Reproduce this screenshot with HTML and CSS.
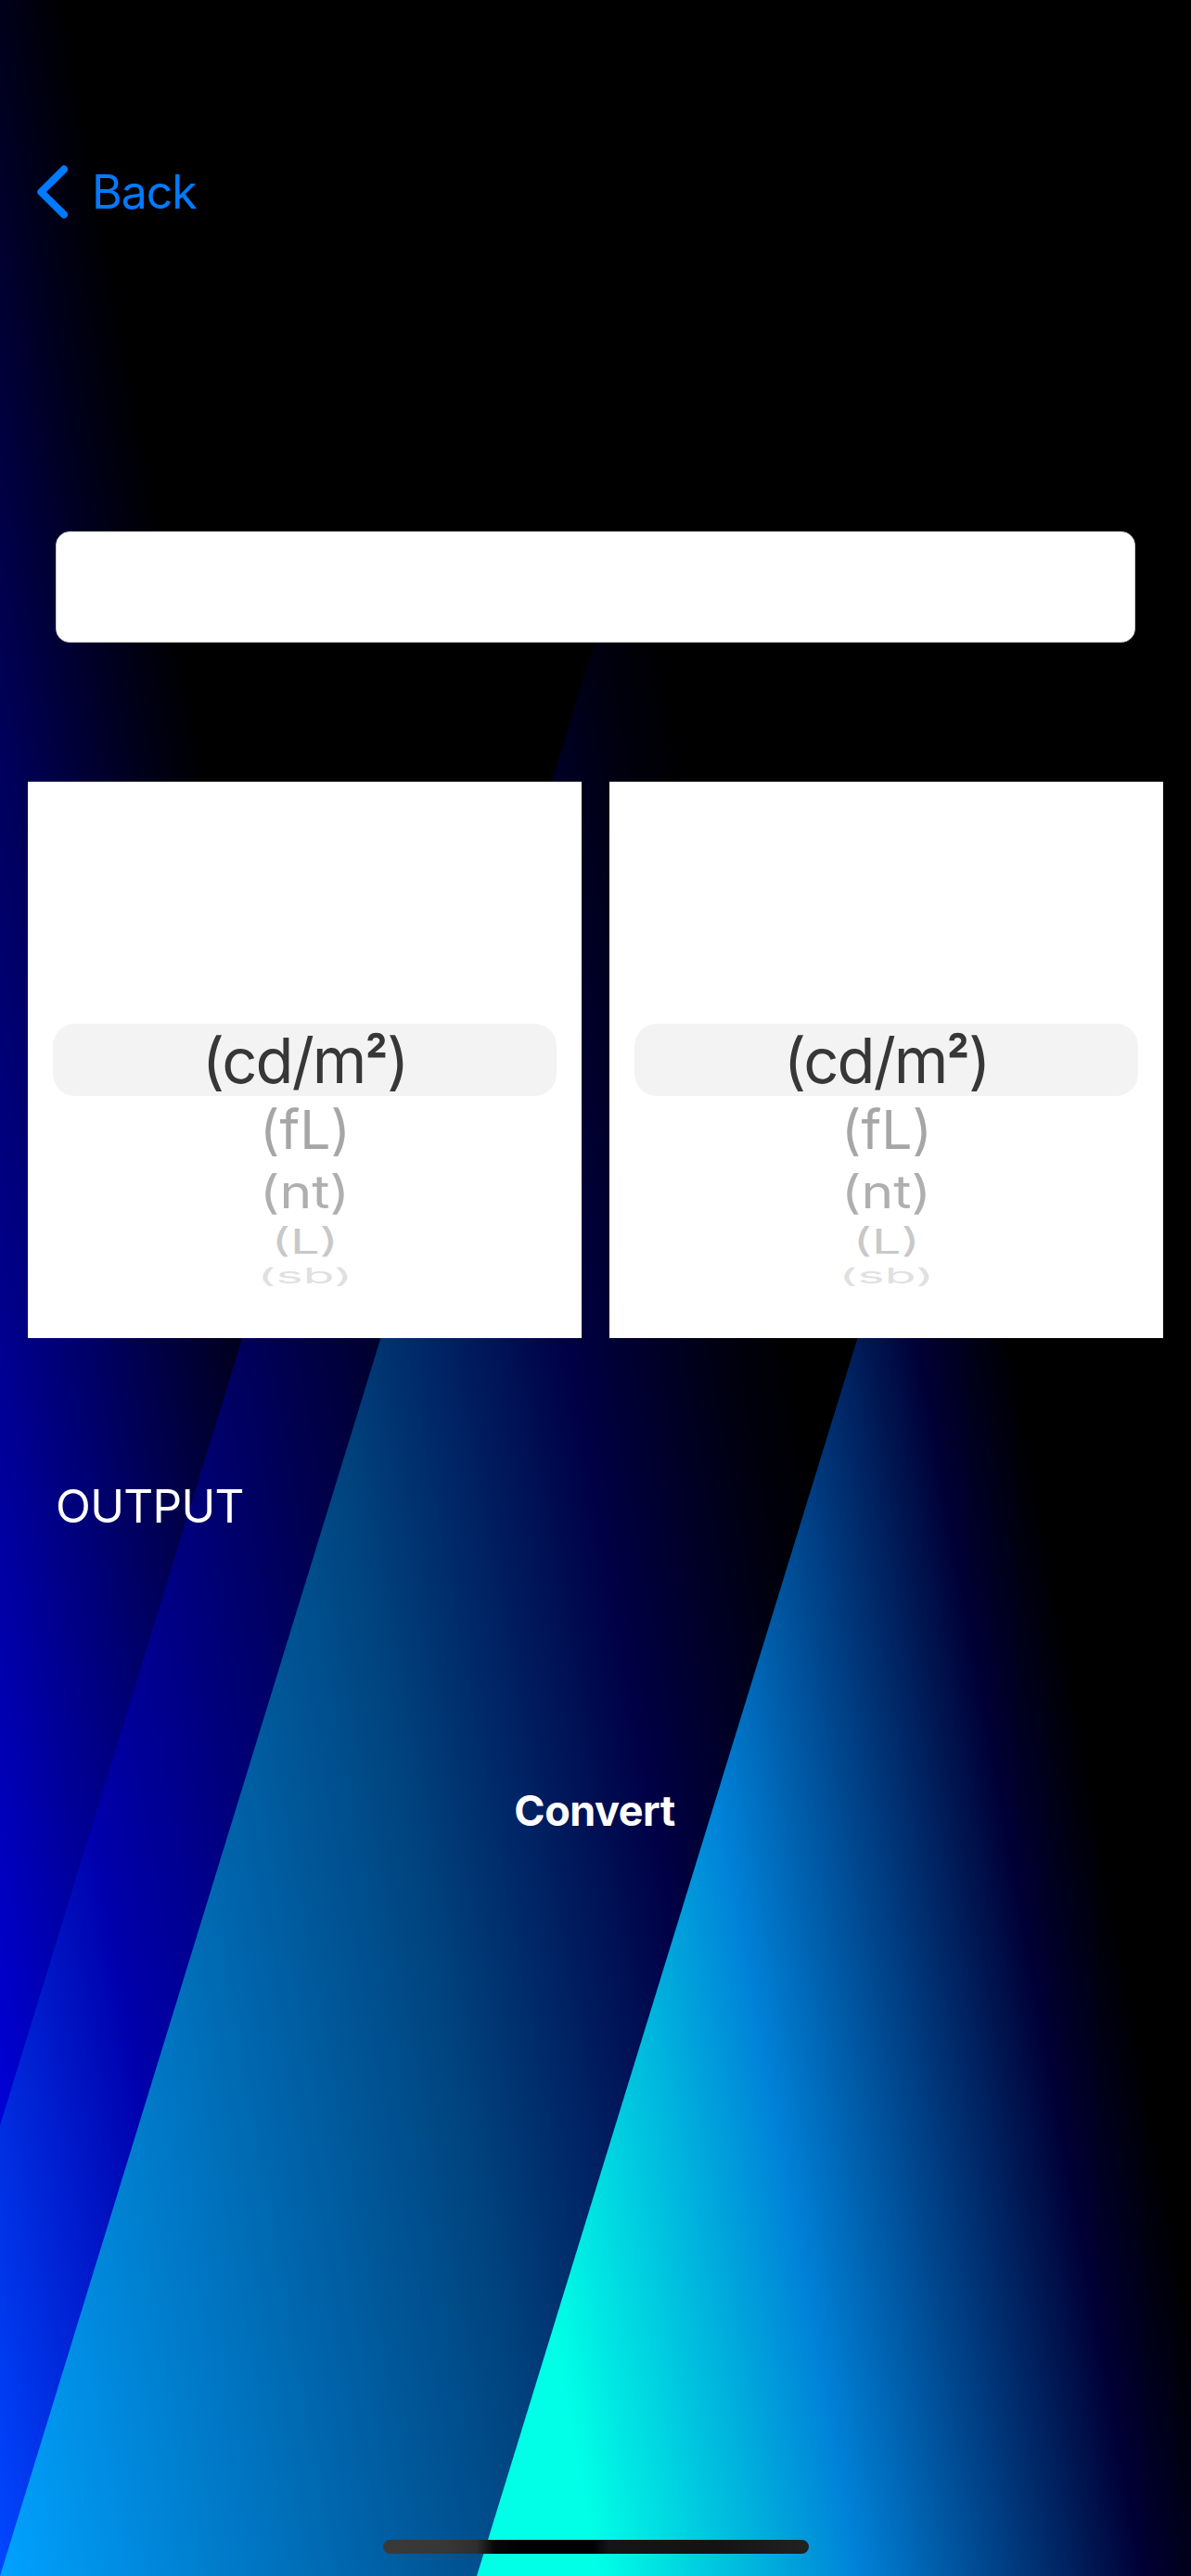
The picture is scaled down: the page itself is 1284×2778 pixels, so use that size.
FILE: index.html
```html
<!DOCTYPE html>
<html lang="en">
<head>
<meta charset="utf-8">
<title>Luminance</title>
<link rel="stylesheet" href="styles.css">
</head>
<body>
<div class="screen">
  <svg class="wallpaper" viewBox="0 0 1284 2778" aria-hidden="true">
    <defs>
      <linearGradient id="far" gradientUnits="userSpaceOnUse" x1="0" x2="580" y1="0" y2="0" gradientTransform="matrix(1 0 .183 1 -508.4 0)">
        <stop offset="0" stop-color="#0000ff"/><stop offset=".86" stop-color="#00001e"/><stop offset="1" stop-color="#000"/>
      </linearGradient>
      <linearGradient id="strip" gradientUnits="userSpaceOnUse" x1="0" x2="800" y1="0" y2="0" gradientTransform="matrix(1 0 .183 1 -508.4 0)">
        <stop offset="0" stop-color="#0048ff"/><stop offset=".31" stop-color="#0000ac"/><stop offset="1" stop-color="#000"/>
      </linearGradient>
      <linearGradient id="middle" gradientUnits="userSpaceOnUse" x1="0" x2="1100" y1="0" y2="0" gradientTransform="matrix(1 0 .183 1 -508.4 0)">
        <stop offset="0" stop-color="#00a2ff"/><stop offset=".53" stop-color="#004580"/><stop offset=".776" stop-color="#000046"/><stop offset=".93" stop-color="#000010"/><stop offset="1" stop-color="#000"/>
      </linearGradient>
      <linearGradient id="near" gradientUnits="userSpaceOnUse" x1="0" x2="1335" y1="0" y2="0" gradientTransform="matrix(1 0 .183 1 -508.4 0)">
        <stop offset=".484" stop-color="#00ffe6"/><stop offset=".693" stop-color="#0082d8"/><stop offset=".923" stop-color="#000036"/><stop offset="1" stop-color="#000"/>
      </linearGradient>
    </defs>
    <path fill="url(#far)" d="M0 0H1284V2778H0z"/>
    <path fill="url(#strip)" d="M0 2292L705 0H1284V2778H0z"/>
    <path fill="url(#middle)" d="M0 2778L854 0H1284V2778z"/>
    <path fill="url(#near)" d="M514 2778L1284 274V2778z"/>
  </svg>

  <header class="nav">
    <a class="back">
      <svg class="chevron" viewBox="0 0 34 58" aria-hidden="true"><path d="M30 4.6L5.3 29L30 53.4"/></svg>
      <span class="back-label">Back</span>
    </a>
  </header>

  <main class="content">
    <input class="value" type="text" aria-label="Value">
    <div class="pickers">
      <ul class="picker">
        <li class="row selected"><span>(cd/m<span class="square">²</span>)</span></li>
        <li class="row near"><span>(fL)</span></li>
        <li class="row mid"><span>(nt)</span></li>
        <li class="row far"><span>(L)</span></li>
        <li class="row edge"><span>(sb)</span></li>
      </ul>
      <ul class="picker">
        <li class="row selected"><span>(cd/m<span class="square">²</span>)</span></li>
        <li class="row near"><span>(fL)</span></li>
        <li class="row mid"><span>(nt)</span></li>
        <li class="row far"><span>(L)</span></li>
        <li class="row edge"><span>(sb)</span></li>
      </ul>
    </div>
    <p class="output"><span>OUTPUT</span></p>
    <button class="convert">Convert</button>
  </main>
  <div class="home-indicator"></div>
</div>
</body>
</html>
```

FILE: styles.css
```css
* { box-sizing: border-box; }

body {
  margin: 0;
  background: #000;
  font-family: Inter, "Liberation Sans", sans-serif;
}

.screen {
  position: relative;
  display: flex;
  flex-direction: column;
  width: 1284px;
  height: 2778px;
  overflow: hidden;
}

.wallpaper {
  position: absolute;
  inset: 0;
  width: 1284px;
  height: 2778px;
}

.nav {
  position: relative;
  height: 273px;
  padding: 141px 0 0 39px;
}

.back {
  display: flex;
  align-items: center;
  gap: 26px;
  height: 132px;
  color: #007aff;
}

.chevron {
  width: 34px;
  height: 58px;
  fill: none;
  stroke: #007aff;
  stroke-width: 8;
  stroke-linecap: round;
  stroke-linejoin: round;
}

.back-label {
  font-size: 50px;
  letter-spacing: -1px;
}

.content {
  position: relative;
  display: flex;
  flex-direction: column;
  flex: 1;
  padding-top: 300px;
}

.value {
  height: 120px;
  margin: 0 60px;
  padding: 0 21px;
  border: 1px solid #ccc;
  border-radius: 15px;
  background: #fff;
  font: inherit;
  font-size: 42px;
}

.pickers {
  display: flex;
  gap: 30px;
  margin: 150px 30px 0;
}

.picker {
  flex: 1;
  height: 600px;
  margin: 0;
  padding: 261px 27px 0;
  background: #fff;
  list-style: none;
}

.row {
  display: flex;
  align-items: center;
  justify-content: center;
  font-size: 60px;
  line-height: 1;
  white-space: nowrap;
}

.selected {
  height: 78px;
  border-radius: 24px;
  background: #f3f3f3;
  color: #373737;
  font-size: 67px;
  letter-spacing: -2px;
}

.square {
  display: inline-block;
  margin: 0 -3px 0 -2px;
  font-weight: 600;
  transform: translateY(2px) scaleX(.8);
}

.near { height: 76px; color: #a6a6a6; }
.near span { transform: translateY(-2.5px) scale(.98, .97); }
.mid { height: 60px; color: #afafaf; }
.mid span { transform: translateY(-3px) scale(.98, .82); }
.far { height: 45px; color: #c8c8c8; }
.far span { transform: translateY(-2.5px) scale(.93, .61); }
.edge { height: 27px; color: #e0e0e0; }
.edge span { transform: translateY(-1.5px) scale(.92, .37); }

.output {
  margin: 151px 0 0 60px;
  color: #fff;
  font-size: 49.5px;
  line-height: 60px;
  letter-spacing: -0.7px;
}

.convert {
  align-self: center;
  margin: 269px 2px 0 0;
  padding: 0;
  border: 0;
  background: none;
  color: #fff;
  font: 700 45px/60px Inter, "Liberation Sans", sans-serif;
  letter-spacing: -0.5px;
}

.home-indicator {
  position: relative;
  align-self: center;
  width: 459px;
  height: 15px;
  margin: 0 0 24px;
  border-radius: 8px;
  background: linear-gradient(90deg, #393939 0, #373737 15%, #2e2e2e 22%, #080808 26%, #000 32%, #000 49%, #151515 53%, #131313 78%, #222 100%);
}
```
